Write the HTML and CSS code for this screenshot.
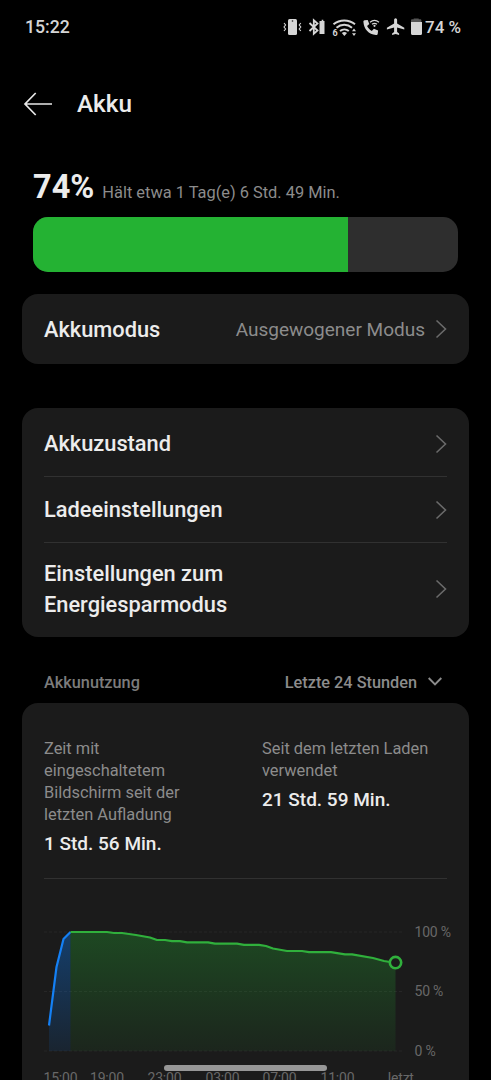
FILE: index.html
```html
<!DOCTYPE html>
<html lang="de">
<head>
    <meta charset="UTF-8">
    <meta name="viewport" content="width=device-width, initial-scale=1.0">
    <title>Akku</title>
    <link rel="stylesheet" href="styles.css">
</head>
<body>
    <!-- Statusleiste -->
    <div class="status-bar">
        <span class="clock">15:22</span>
        <svg class="status-icons" width="144" height="22" viewBox="0 0 144 22" fill="none" stroke="#d6d6d6">
            <!-- Vibration -->
            <rect x="6" y="3" width="9" height="16" rx="1.5" fill="#d6d6d6" stroke="none"/>
            <circle cx="10.5" cy="5" r="0.8" fill="#222" stroke="none"/>
            <path d="M2 7l1.6 2L2 11l1.6 2L2 15M18.8 7l-1.6 2 1.6 2-1.6 2 1.6 2" stroke-width="1.1"/>
            <!-- Bluetooth -->
            <path d="M27.500 7l8 7.500-3.700 3.200V4.300l3.700 3.200-8 7.500" stroke-width="1.8"/>
            <path d="M38.500 5h1.200V3.800h1.600V5h1.200v13h-5V5z" fill="#d6d6d6" stroke="none"/>
            <!-- WLAN -->
            <path d="M51.500 8.300a17 17 0 0 1 21.500 0M54.500 11.700a12 12 0 0 1 15.500 0M58 15a7 7 0 0 1 8.800 0" stroke-width="2"/>
            <path d="M59.800 17a4 4 0 0 1 5.200 0l-2.600 3z" fill="#d6d6d6" stroke="none"/>
            <text x="50.500" y="20.300" class="wifi-gen">6</text>
            <path d="M70 15.200l2-2.700 2 2.700zM70 17.200l2 2.700 2-2.700z" fill="#d6d6d6" stroke="none"/>
            <!-- WLAN-Anruf -->
            <path d="M82.500 4.300l3.200-.4 1.600 4.200-2.200 2c1 2.200 2.600 3.800 4.700 4.900l2.100-2.200 4.200 1.700-.4 3.400c-.2.800-.8 1.200-1.700 1.100C86.500 18.300 81.800 12.800 81.400 5.700c0-.8.400-1.300 1.100-1.400z" fill="#d6d6d6" stroke="none"/>
            <path d="M88 6.200a7.400 7.400 0 0 1 9 0M90 8.300a4.200 4.200 0 0 1 5 0" stroke-width="1.2"/>
            <circle cx="92.500" cy="9.800" r="1.1" fill="#d6d6d6" stroke="none"/>
            <!-- Flugmodus -->
            <path d="M122.300 13.500v-1.800l-7.200-4.300V4c0-1-.7-1.700-1.500-1.700s-1.500.7-1.500 1.700v3.400l-7.200 4.300v1.800l7.200-2.100v4.600l-2 1.400v1.500l3.500-1 3.500 1v-1.500l-2-1.400v-4.600z" fill="#d6d6d6" stroke="none"/>
            <!-- Akku -->
            <path d="M129 6V4.500c0-.8.500-1.200 1.200-1.200h1.500V2.500h5v.8h1.500c.7 0 1.200.4 1.200 1.200V6z" fill="#555" stroke="none"/>
            <path d="M129 6h11v11.500c0 .9-.5 1.500-1.500 1.500h-8c-1 0-1.500-.6-1.500-1.500z" fill="#d6d6d6" stroke="none"/>
        </svg>
        <span class="status-percent">74 %</span>
    </div>

    <!-- Kopfzeile -->
    <div class="header">
        <svg width="30" height="24" viewBox="0 0 30 24" fill="none" stroke="#e8e8e8" stroke-width="1.7">
            <path d="M12.700 1L2 12l10.700 11M2 12H29"/>
        </svg>
        <h1 class="page-title">Akku</h1>
    </div>

    <!-- Ladestand -->
    <div class="level">
        <div class="level-text">
            <span class="level-value">74%</span>
            <span class="level-info">Hält etwa 1 Tag(e) 6 Std. 49 Min.</span>
        </div>
        <div class="level-bar">
            <div class="level-fill" style="width: 74%"></div>
        </div>
    </div>

    <div class="card mode-card">
        <div class="row">
            <span class="row-label">Akkumodus</span>
            <span class="row-value">Ausgewogener Modus</span>
            <svg class="chevron" width="12" height="20" viewBox="0 0 12 20"><path d="M1.500 1.500l9 8.500-9 8.500"/></svg>
        </div>
    </div>

    <div class="card settings-card">
        <div class="row">
            <span class="row-label">Akkuzustand</span>
            <svg class="chevron" width="12" height="20" viewBox="0 0 12 20"><path d="M1.500 1.500l9 8.500-9 8.500"/></svg>
        </div>
        <div class="row">
            <span class="row-label">Ladeeinstellungen</span>
            <svg class="chevron" width="12" height="20" viewBox="0 0 12 20"><path d="M1.500 1.500l9 8.500-9 8.500"/></svg>
        </div>
        <div class="row row-tall">
            <span class="row-label">Einstellungen zum<br>Energiesparmodus</span>
            <svg class="chevron" width="12" height="20" viewBox="0 0 12 20"><path d="M1.500 1.500l9 8.500-9 8.500"/></svg>
        </div>
    </div>

    <div class="section-header">
        <span class="section-title">Akkunutzung</span>
        <span class="section-range">Letzte 24 Stunden</span>
        <svg width="16" height="12" viewBox="0 0 16 12" fill="none" stroke="#8c8c8c" stroke-width="1.9"><path d="M1.700 1L8 7.500 14.300 1"/></svg>
    </div>

    <!-- Akkunutzung -->
    <div class="card usage-card">
        <div class="stats">
            <div class="stat">
                <div class="stat-label">Zeit mit<br>eingeschaltetem<br>Bildschirm seit der<br>letzten Aufladung</div>
                <div class="stat-value">1 Std. 56 Min.</div>
            </div>
            <div class="stat">
                <div class="stat-label">Seit dem letzten Laden<br>verwendet</div>
                <div class="stat-value">21 Std. 59 Min.</div>
            </div>
        </div>
        <svg class="chart" width="447" height="210" viewBox="22 879 447 210">
            <defs>
                <linearGradient id="green" x1="0" y1="0" x2="0" y2="1">
                    <stop offset="0" stop-color="#24b233" stop-opacity="0.3"/>
                    <stop offset="1" stop-color="#24b233" stop-opacity="0.07"/>
                </linearGradient>
                <linearGradient id="blue" x1="0" y1="0" x2="0" y2="1">
                    <stop offset="0" stop-color="#0a78f0" stop-opacity="0.38"/>
                    <stop offset="1" stop-color="#0a78f0" stop-opacity="0.1"/>
                </linearGradient>
            </defs>
            <path class="grid" d="M44 932H402M44 991.500H402M44 1051H402"/>
            <path fill="url(#blue)" d="M49 1025L56.500 967 63.500 939 70.500 932V1051H49z"/>
            <path fill="url(#green)" d="M70.500 932H107L114 933H122L136 935 150 937.500 157 940H165L172 941.200H180L187 942.400H208L215 943.700H237L244 944.800H259L266 946 273 948.500 287 951H302L309 952.200H331L345 954.300H352L373 958 384 961 395.500 962.500V1051H70.500z"/>
            <path class="line line-blue" d="M49 1025.500L56.500 967 63.500 939 70.500 932"/>
            <path class="line line-green" d="M70.500 932H107L114 933H122L136 935 150 937.500 157 940H165L172 941.200H180L187 942.400H208L215 943.700H237L244 944.800H259L266 946 273 948.500 287 951H302L309 952.200H331L345 954.300H352L373 958 384 961 390 962"/>
            <circle class="now" cx="395.500" cy="962.600" r="5.700"/>
            <g class="axis">
                <text x="414.500" y="937.400">100 %</text>
                <text x="414.500" y="996.400">50 %</text>
                <text x="414.500" y="1056">0 %</text>
                <text x="43.500" y="1083.400">15:00</text>
                <text x="90" y="1083.400">19:00</text>
                <text x="147.500" y="1083.400">23:00</text>
                <text x="205.500" y="1083.400">03:00</text>
                <text x="262.500" y="1083.400">07:00</text>
                <text x="320.500" y="1083.400">11:00</text>
                <text x="383.500" y="1083.400">Jetzt</text>
            </g>
        </svg>
    </div>

    <div class="nav-handle"></div>
</body>
</html>
```

FILE: styles.css
```css
body {
    margin: 0;
    height: 1080px;
    overflow: hidden;
    background-color: #000;
    color: #ececec;
    font-family: Roboto, "Liberation Sans", sans-serif;
}

/* Statusleiste */
.status-bar {
    display: flex;
    align-items: center;
    height: 54px;
    padding: 0 30px 1px 25px;
    box-sizing: border-box;
    color: #d6d6d6;
    font-weight: 500;
}

.clock {
    font-size: 17.7px;
    flex: 1;
}

.status-percent {
    width: 36px;
    margin-left: -1px;
    font-size: 17px;
    white-space: nowrap;
}

.wifi-gen {
    font-size: 9px;
    font-weight: 700;
    fill: #d6d6d6;
    stroke: none;
}

/* Kopfzeile */
.header {
    display: flex;
    align-items: center;
    gap: 24px;
    height: 99px;
    padding-left: 23px;
}

.page-title {
    margin: 0;
    font-size: 24.3px;
    font-weight: 500;
}

/* Ladestand */
.level {
    padding: 14px 33px 0;
}

.level-text {
    display: flex;
    align-items: baseline;
    gap: 8px;
    height: 50px;
    line-height: 41px;
    white-space: nowrap;
}

.level-value {
    font-size: 32.5px;
    font-weight: 700;
}

.level-info {
    font-size: 16.4px;
    color: #8c8c8c;
}

.level-bar {
    height: 55px;
    border-radius: 15px;
    background-color: #2e2e2e;
    overflow: hidden;
}

.level-fill {
    height: 100%;
    background-color: #24b233;
}

/* Karten */
.card {
    margin: 0 22px;
    border-radius: 16px;
    background-color: #1b1b1b;
}

.mode-card {
    margin-top: 22px;
}

.settings-card {
    margin-top: 44px;
}

.row {
    display: flex;
    align-items: center;
    height: 70px;
    margin: 0 22px;
}

.settings-card .row {
    height: 65px;
    border-bottom: 1px solid #313131;
}

.settings-card .row:first-child {
    height: 65px;
    padding-top: 3px;
}

.settings-card .row-tall {
    height: 91px;
    padding-bottom: 3px;
    border-bottom: none;
}

.row-label {
    flex: 1;
    font-size: 21.8px;
    line-height: 31px;
    font-weight: 500;
}

.row-tall .row-label {
    padding-top: 1px;
}

.row-value {
    margin-right: 10px;
    font-size: 19px;
    color: #8c8c8c;
}

.chevron {
    fill: none;
    stroke: #6a6a6a;
    stroke-width: 1.6;
}

/* Akkunutzung */
.section-header {
    display: flex;
    align-items: center;
    height: 66px;
    padding: 25px 48px 0 44px;
    box-sizing: border-box;
    font-size: 16.3px;
    font-weight: 500;
    color: #8c8c8c;
}

.section-title {
    flex: 1;
    color: #7c7c7c;
}

.section-range {
    margin-right: 10px;
}

.usage-card {
    border-radius: 16px 16px 0 0;
}

.stats {
    display: flex;
    height: 176px;
    margin: 0 22px;
    padding-top: 35px;
    box-sizing: border-box;
    border-bottom: 1px solid #313131;
}

.stat {
    width: 218px;
    flex-shrink: 0;
    white-space: nowrap;
}

.stat-label {
    font-size: 16.4px;
    line-height: 22px;
    color: #8c8c8c;
}

.stat-value {
    margin-top: 3px;
    font-size: 19px;
    line-height: 30px;
    font-weight: 500;
}

.chart {
    display: block;
}

.grid {
    fill: none;
    stroke: #272727;
    stroke-width: 1;
    stroke-dasharray: 3 2;
}

.line {
    fill: none;
    stroke-width: 2.2;
    stroke-linejoin: round;
}

.line-blue {
    stroke: #1480f5;
}

.line-green {
    stroke: #30b03c;
}

.now {
    fill: #1b1b1b;
    stroke: #30b03c;
    stroke-width: 2.6;
}

.axis {
    font-size: 14px;
    letter-spacing: -0.2px;
    fill: #686868;
}

/* Navigationsleiste */
.nav-handle {
    position: absolute;
    left: 164px;
    top: 1065px;
    width: 163px;
    height: 6px;
    border-radius: 3px;
    background-color: #979797;
}
```
